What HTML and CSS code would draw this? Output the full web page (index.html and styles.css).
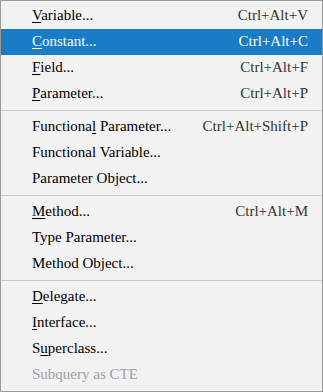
FILE: index.html
```html
<!DOCTYPE html>
<html lang="en">
<head>
  <meta charset="UTF-8">
  <title>Extract menu</title>
  <link rel="stylesheet" href="styles.css">
</head>
<body>
  <div class="menu">
    <div class="item"><span class="label"><u>V</u>ariable...</span><span class="key">Ctrl+Alt+V</span></div>
    <div class="item active"><span class="label"><u>C</u>onstant...</span><span class="key">Ctrl+Alt+C</span></div>
    <div class="item"><span class="label"><u>F</u>ield...</span><span class="key">Ctrl+Alt+F</span></div>
    <div class="item"><span class="label"><u>P</u>arameter...</span><span class="key">Ctrl+Alt+P</span></div>
    <div class="sep"></div>
    <div class="item"><span class="label">Functiona<u>l</u> Parameter...</span><span class="key">Ctrl+Alt+Shift+P</span></div>
    <div class="item"><span class="label">Functional Variable...</span></div>
    <div class="item"><span class="label">Parameter Object...</span></div>
    <div class="sep"></div>
    <div class="item"><span class="label"><u>M</u>ethod...</span><span class="key">Ctrl+Alt+M</span></div>
    <div class="item"><span class="label">Type Parameter...</span></div>
    <div class="item"><span class="label">Method Object...</span></div>
    <div class="sep"></div>
    <div class="item"><span class="label"><u>D</u>elegate...</span></div>
    <div class="item"><span class="label"><u>I</u>nterface...</span></div>
    <div class="item"><span class="label">S<u>u</u>perclass...</span></div>
    <div class="item disabled"><span class="label">Subquery as CTE</span></div>
  </div>
</body>
</html>
```

FILE: styles.css
```css
html, body {
  margin: 0;
  padding: 0;
}
body {
  font-family: "Liberation Serif", "DejaVu Serif", serif;
  font-size: 15px;
  background: #f2f2f2;
}
.menu {
  width: 323px;
  height: 392px;
  box-sizing: border-box;
  border: 1px solid #999;
  background: #f2f2f2;
  padding: 2px 0 3px 0;
}
.item {
  display: flex;
  justify-content: space-between;
  align-items: center;
  box-sizing: border-box;
  height: 26px;
  padding: 0 14px 2px 31px;
  color: #000;
}
.item u {
  text-underline-offset: 2px;
}
.key {
  color: #333;
}
.item.active {
  background: #1a7cc7;
  color: #fff;
}
.item.active .key {
  color: #fff;
}
.item.disabled {
  color: #a0a0a0;
}
.sep {
  height: 1px;
  background: #c8c8c8;
  margin: 3px 0;
}
```
